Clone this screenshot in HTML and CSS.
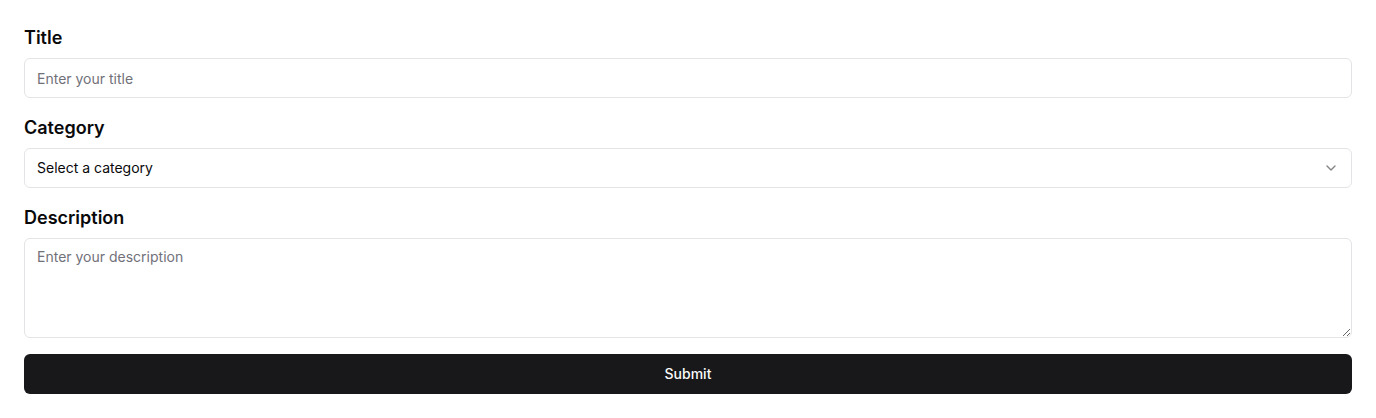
FILE: index.html
```html
<!DOCTYPE html>
<html lang="en">
<head>
<meta charset="utf-8">
<title>Form</title>
<link rel="stylesheet" href="styles.css">
</head>
<body>
<form class="form">
  <div class="field">
    <label class="label" for="title">Title</label>
    <input class="input" id="title" type="text" placeholder="Enter your title">
  </div>
  <div class="field">
    <label class="label" for="category">Category</label>
    <button type="button" class="select" id="category">
      <span class="select-text">Select a category</span>
      <svg class="chev" width="16" height="16" viewBox="0 0 24 24" fill="none" stroke="currentColor" stroke-width="2" stroke-linecap="round" stroke-linejoin="round"><path d="m6 9 6 6 6-6"/></svg>
    </button>
  </div>
  <div class="field">
    <label class="label" for="desc">Description</label>
    <textarea class="textarea" id="desc" placeholder="Enter your description"></textarea>
  </div>
  <button type="button" class="submit"><span class="submit-text">Submit</span></button>
</form>
</body>
</html>
```
FILE: styles.css
```css
* { box-sizing: border-box; }
html, body { margin: 0; background: #ffffff; }
body {
  font-family: Inter, "Noto Sans", sans-serif;
  color: #09090b;
}
.form {
  display: flex;
  flex-direction: column;
  gap: 16px;
  padding: 24px 24px;
}
.field {
  display: flex;
  flex-direction: column;
  gap: 6px;
}
.label {
  font-size: 18px;
  line-height: 28px;
  font-weight: 600;
  color: #09090b;
}
.input, .select, .textarea {
  width: 100%;
  border: 1px solid #e4e4e7;
  border-radius: 6px;
  background: #ffffff;
  font-family: inherit;
  font-size: 14px;
  color: #09090b;
  outline: none;
}
.input {
  height: 40px;
  padding: 0 12px;
}
.input::placeholder, .textarea::placeholder { color: #71717a; }
.select {
  height: 40px;
  padding: 0 12px;
  display: flex;
  align-items: center;
  justify-content: space-between;
  text-align: left;
  cursor: pointer;
}
.select-text { line-height: 20px; margin-top: -1px; }
.chev { opacity: 0.5; color: #09090b; }
.textarea {
  height: 100px;
  padding: 8px 12px;
  line-height: 20px;
  resize: vertical;
  display: block;
}
.submit {
  height: 40px;
  width: 100%;
  border: none;
  border-radius: 6px;
  background: #18181b;
  color: #fafafa;
  font-family: inherit;
  font-size: 14px;
  font-weight: 500;
  cursor: pointer;
  display: flex;
  align-items: center;
  justify-content: center;
}
.submit-text { line-height: 20px; margin-top: -1px; }
```
